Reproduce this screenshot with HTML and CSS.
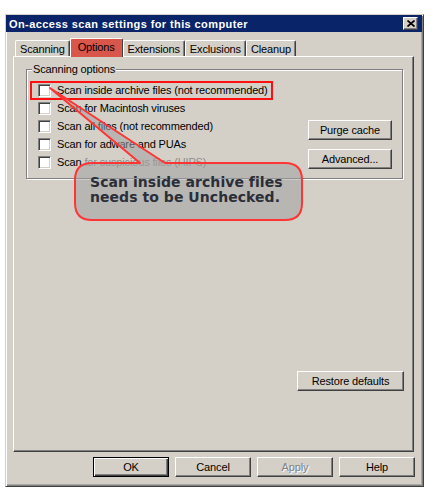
FILE: index.html
```html
<!DOCTYPE html>
<html>
<head>
<meta charset="utf-8">
<link rel="stylesheet" href="styles.css">
</head>
<body>
<div class="window">
  <div class="titlebar">
    <span class="title">On-access scan settings for this computer</span>
    <span class="close"><svg width="8" height="7" viewBox="0 0 8 7"><path d="M0.5 0.5 L7.5 6.5 M7.5 0.5 L0.5 6.5" stroke="#000" stroke-width="1.7" fill="none"/></svg></span>
  </div>
  <div class="tabs">
    <div class="tab">Scanning</div>
    <div class="tab active">Options</div>
    <div class="tab">Extensions</div>
    <div class="tab">Exclusions</div>
    <div class="tab">Cleanup</div>
  </div>
  <div class="panel">
    <fieldset class="group">
      <legend>Scanning options</legend>
      <div class="group-body">
        <div class="checks">
          <div class="check"><span class="box"></span><span>Scan inside archive files (not recommended)</span></div>
          <div class="check"><span class="box"></span><span>Scan for Macintosh viruses</span></div>
          <div class="check"><span class="box"></span><span>Scan all files (not recommended)</span></div>
          <div class="check"><span class="box"></span><span>Scan for adware and PUAs</span></div>
          <div class="check"><span class="box"></span><span>Scan <span class="faded">for suspicious files (HIPS)</span></span></div>
        </div>
        <div class="side">
          <div class="btn side-btn">Purge cache</div>
          <div class="btn side-btn">Advanced...</div>
        </div>
      </div>
    </fieldset>
    <div class="btn restore">Restore defaults</div>
  </div>
  <div class="actions">
    <div class="btn action default">OK</div>
    <div class="btn action">Cancel</div>
    <div class="btn action disabled">Apply</div>
    <div class="btn action">Help</div>
  </div>
</div>
<svg class="overlay" width="447" height="497" viewBox="0 0 447 497">
  <rect x="31" y="82" width="241" height="17" fill="none" stroke="#ff1010" stroke-width="2"/>
  <path d="M92 163 L140 163 L50 88 L165 163 L285 163 Q302 163 302 180 L302 203 Q302 220 285 220 L92 220 Q75 220 75 203 L75 180 Q75 163 92 163 Z" fill="rgba(160,160,160,0.55)" stroke="#ff3434" stroke-width="2" stroke-linejoin="round"/>
</svg>
<div class="callout-text">Scan inside archive files<br>needs to be Unchecked.</div>
</body>
</html>
```
FILE: styles.css
```css
html, body {
  margin: 0;
  padding: 0;
  background: #fff;
}
body {
  position: relative;
  width: 447px;
  height: 497px;
  overflow: hidden;
  font-family: "Liberation Sans", Arial, sans-serif;
  font-size: 11px;
  letter-spacing: -0.15px;
  color: #000;
}
.window {
  box-sizing: border-box;
  margin: 14px 0 0 5px;
  width: 419px;
  height: 473px;
  background: #d4d0c8;
  border: 1px solid;
  border-color: #d4d0c8 #404040 #404040 #d4d0c8;
  box-shadow: inset 1px 1px 0 #fff, inset -1px -1px 0 #808080, inset -2px -2px 0 #a8a6a0;
}
.titlebar {
  height: 17px;
  margin-right: 1px;
  background: #0a246a;
  display: flex;
  align-items: center;
  padding-left: 3px;
}
.title {
  color: #fff;
  font-weight: bold;
  letter-spacing: 0.4px;
  flex: 1;
}
.close {
  box-sizing: border-box;
  width: 15px;
  height: 13px;
  margin-right: 4px;
  background: #d4d0c8;
  border: 1px solid;
  border-color: #fff #404040 #404040 #fff;
  box-shadow: inset -1px -1px 0 #808080;
  display: flex;
  align-items: center;
  justify-content: center;
}
.close svg { display: block; }
.tabs {
  display: flex;
  align-items: flex-end;
  height: 18px;
  margin: 6px 0 0 9px;
  position: relative;
  z-index: 1;
}
.tab {
  box-sizing: border-box;
  height: 16px;
  padding: 0 4px;
  display: flex;
  align-items: center;
  justify-content: center;
  border-top: 1px solid #fff;
  border-left: 1px solid #fff;
  border-right: 1px solid #404040;
  box-shadow: inset -1px 0 0 #808080;
  border-radius: 2px 2px 0 0;
  background: #d4d0c8;
}
.tab.active {
  height: 19px;
  margin-bottom: -1px;
  padding: 0 7px 2px;
  background: #d9564a;
}
.panel {
  box-sizing: border-box;
  margin-left: 7px;
  width: 401px;
  height: 396px;
  border: 1px solid;
  border-color: #fff #404040 #404040 #fff;
  box-shadow: inset -1px -1px 0 #808080;
  padding: 6px 10px 0 12px;
  display: flex;
  flex-direction: column;
}
.group {
  margin: 0;
  min-width: 0;
  padding: 5px 10px 7px 11px;
  border: 1px solid #808080;
  box-shadow: 1px 1px 0 #fff, inset 1px 1px 0 #fff;
}
.group legend {
  padding: 0 1px;
  margin-left: -6px;
  line-height: 13px;
  background: #d4d0c8;
}
.group-body {
  display: flex;
}
.checks {
  display: flex;
  flex-direction: column;
}
.check {
  height: 18px;
  display: flex;
  align-items: center;
  gap: 6px;
}
.box {
  box-sizing: border-box;
  width: 13px;
  height: 13px;
  background: #fff;
  border: 1px solid;
  border-color: #808080 #fff #fff #808080;
  box-shadow: inset 1px 1px 0 #404040, inset -1px -1px 0 #d4d0c8;
}
.faded { color: #8c8c8c; }
.side {
  margin-left: auto;
  padding-top: 39px;
  display: flex;
  flex-direction: column;
  gap: 9px;
}
.btn {
  box-sizing: border-box;
  height: 20px;
  display: flex;
  align-items: center;
  justify-content: center;
  background: #d4d0c8;
  border: 1px solid;
  border-color: #fff #404040 #404040 #fff;
  box-shadow: inset -1px -1px 0 #808080;
}
.side-btn { width: 84px; }
.restore {
  width: 107px;
  align-self: flex-end;
  margin: 192px -1px 0 0;
}
.actions {
  display: flex;
  justify-content: flex-end;
  gap: 6px;
  margin-top: 5px;
  padding-right: 8px;
}
.action { width: 76px; }
.action.default {
  border-color: #000;
  box-shadow: inset 1px 1px 0 #fff, inset -1px -1px 0 #404040, inset -2px -2px 0 #808080;
}
.action.disabled {
  color: #808080;
  text-shadow: 1px 1px 0 #fff;
}
.overlay {
  position: absolute;
  left: 0;
  top: 0;
  pointer-events: none;
}
.callout-text {
  position: absolute;
  left: 90px;
  top: 175px;
  font-family: "DejaVu Sans", Verdana, sans-serif;
  font-weight: bold;
  font-size: 14px;
  line-height: 15px;
  letter-spacing: 0.05px;
  color: #2a2e38;
}
```
